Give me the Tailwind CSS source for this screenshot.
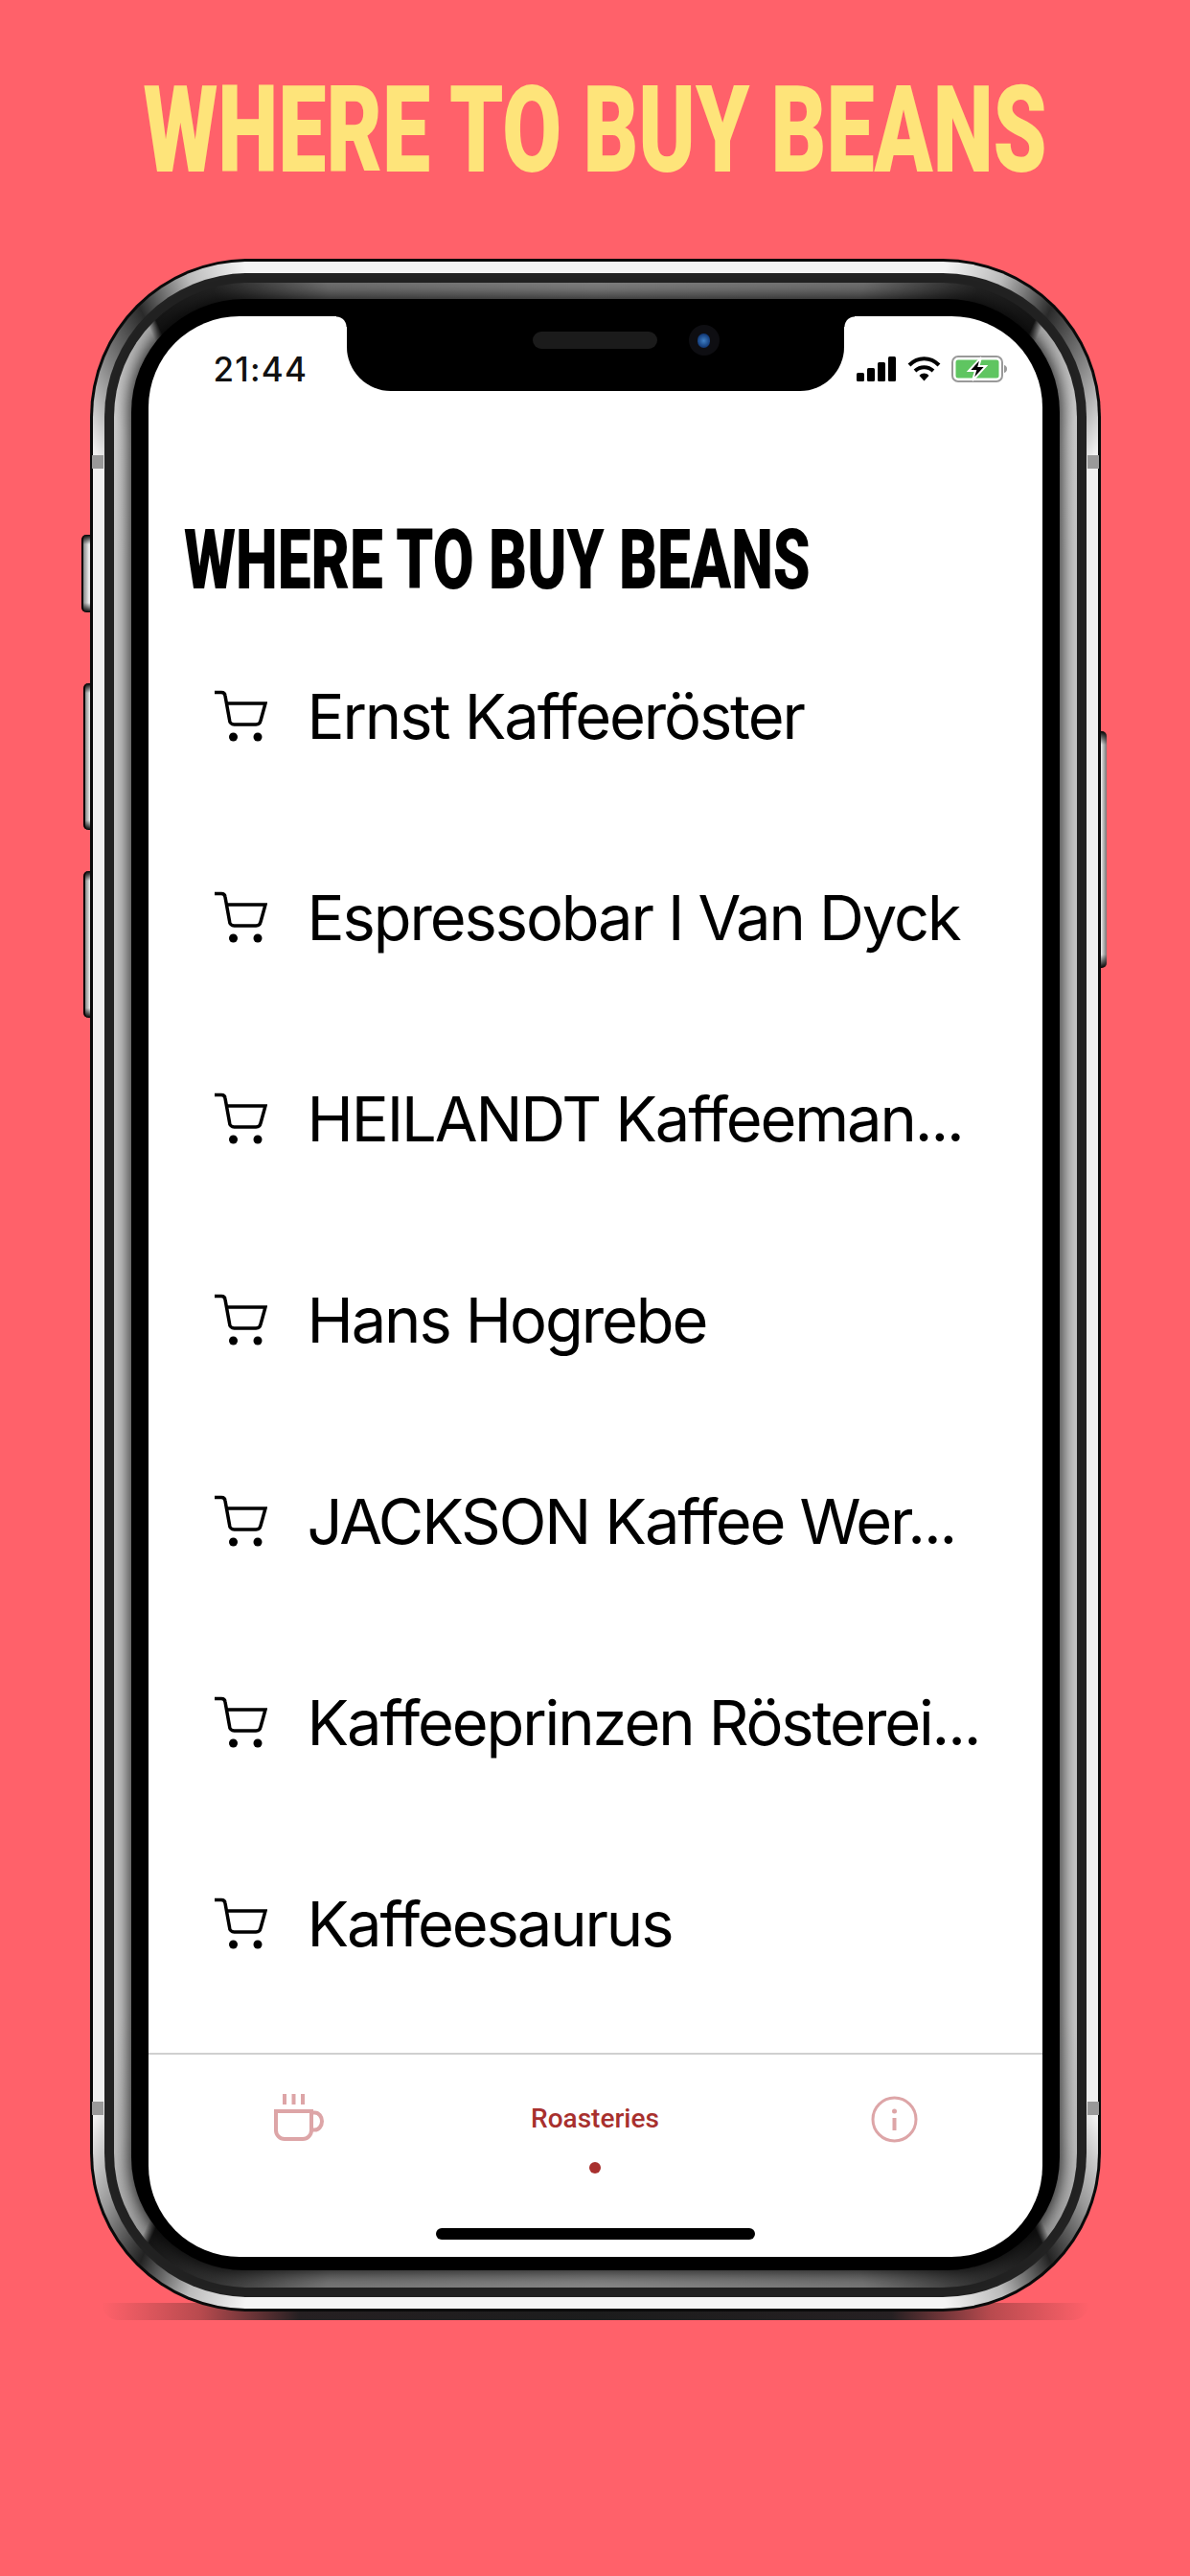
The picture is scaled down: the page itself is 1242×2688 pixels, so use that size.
<!DOCTYPE html>
<html lang="en">
<head>
    <meta charset="UTF-8">
    <title>Where to buy beans</title>
    <script src="https://cdn.jsdelivr.net/npm/@tailwindcss/browser@4"></script>
</head>
<body class="bg-[#ff616a] w-[1242px] h-[2688px] overflow-hidden flex flex-col items-center pt-[72px] font-['Inter',sans-serif]">
    <h1 class="w-[944px] h-[127px] mb-[71px] flex justify-center whitespace-nowrap font-['Roboto',sans-serif] font-black text-[127px] leading-none text-[#fee47a]">
        <span class="shrink-0 scale-x-[0.706]">WHERE TO BUY BEANS</span>
    </h1>

    <!-- phone -->
    <div class="relative w-[1055px] h-[2142px] shrink-0">
        <div class="absolute -bottom-[9px] left-[12px] right-[12px] h-[18px] rounded-b-full bg-[linear-gradient(to_right,#ff606800,#b84a4e_10%,#262022_20%,#1c1c1c_50%,#262022_80%,#b84a4e_90%,#ff606800)]"></div>
        <div class="absolute -left-[9px] top-[288px] w-[14px] h-[81px] rounded-l-[5px] border-l-2 border-black bg-[linear-gradient(to_bottom,#000,#0000_10px,#0000_calc(100%-10px),#000),linear-gradient(to_right,#888,#eee,#999)]"></div>
        <div class="absolute -left-[7px] top-[443px] w-[12px] h-[153px] rounded-l-[5px] border-l-2 border-black bg-[linear-gradient(to_bottom,#000,#0000_10px,#0000_calc(100%-10px),#000),linear-gradient(to_right,#888,#eee,#999)]"></div>
        <div class="absolute -left-[7px] top-[639px] w-[12px] h-[153px] rounded-l-[5px] border-l-2 border-black bg-[linear-gradient(to_bottom,#000,#0000_10px,#0000_calc(100%-10px),#000),linear-gradient(to_right,#888,#eee,#999)]"></div>
        <div class="absolute -right-[6px] top-[493px] w-[12px] h-[247px] rounded-r-[5px] bg-[linear-gradient(to_bottom,#000,#0000_14px,#0000_calc(100%-14px),#000),linear-gradient(to_left,#777,#eee,#999)]"></div>

        <div class="relative h-full bg-[#0a0a0a] rounded-[165px] p-[3px]">
            <div class="h-full rounded-[162px] p-[12px] bg-[conic-gradient(#f4f4f4_0deg,#f4f4f4_19deg,#bbb_22deg,#2a2a2a_25deg,#888_28deg,#f0f0f0_31deg,#f0f0f0_149deg,#999_152deg,#222_155deg,#bbb_158deg,#f4f4f4_161deg,#f4f4f4_199deg,#bbb_202deg,#222_205deg,#999_208deg,#f0f0f0_211deg,#f0f0f0_329deg,#888_332deg,#2a2a2a_335deg,#bbb_338deg,#f4f4f4_341deg)]">
                <div class="h-full rounded-[150px] p-[10px] bg-[#222]">
                    <div class="h-full rounded-[140px] pt-[17px] px-[18px] pb-[18px] bg-[conic-gradient(#808080_0deg,#707070_15deg,#222_21deg,#151515_24.5deg,#aaa_25deg,#ccc_29deg,#c8c8c8_33deg,#c8c8c8_147deg,#bbb_151deg,#999_154.5deg,#151515_155deg,#333_159deg,#777_165deg,#888_180deg,#777_195deg,#333_201deg,#151515_205deg,#999_205.5deg,#bbb_209deg,#c8c8c8_213deg,#c8c8c8_327deg,#ccc_331deg,#aaa_335deg,#151515_335.5deg,#222_339deg,#707070_345deg,#808080_360deg)]">
                        <div class="h-full rounded-[118px] pt-[18px] px-[18px] pb-[14px] bg-black shadow-[0_0_16px_3px_rgba(0,0,0,0.75)]">

                            <!-- screen -->
                            <div class="relative h-full bg-white rounded-[95px] flex flex-col">
                                <div class="absolute top-0 left-[207px] w-[519px] h-[78px] bg-black rounded-b-[46px]">
                                    <div class="absolute top-0 -left-[11px] w-[11px] h-[11px] bg-[radial-gradient(circle_at_0_100%,#fff0_10px,#000_11px)]"></div>
                                    <div class="absolute top-0 -right-[11px] w-[11px] h-[11px] bg-[radial-gradient(circle_at_100%_100%,#fff0_10px,#000_11px)]"></div>
                                    <div class="absolute top-[16px] left-[194px] w-[130px] h-[18px] rounded-full bg-[#1b1b1b]"></div>
                                    <div class="absolute top-[9px] left-[357px] w-[32px] h-[32px] rounded-full bg-[#0e0e12] flex items-center justify-center">
                                        <div class="w-[13px] h-[15px] rounded-full bg-[radial-gradient(circle,#3f7fc4,#123a78_70%)]"></div>
                                    </div>
                                </div>

                                <!-- status bar -->
                                <div class="h-[34px] mt-[38px] pl-[68px] pr-[36px] flex items-center justify-between">
                                    <span class="font-medium text-[35px] tracking-[1.200px] leading-none text-[#111]">21:44</span>
                                    <div class="flex items-center gap-[11px]">
                                        <svg width="42" height="26" viewBox="0 0 42 26"><rect x="0" y="17" width="8" height="9" rx="1.5"/><rect x="11" y="12" width="8" height="14" rx="1.5"/><rect x="22" y="6" width="8" height="20" rx="1.5"/><rect x="33" y="0" width="8" height="26" rx="1.5"/></svg>
                                        <svg width="35" height="26" viewBox="0 0 35 26"><path d="M2 9C11 0 24 0 33 9" fill="none" stroke="#000" stroke-width="4"/><path d="M8 15C13.500 10 21.500 10 27 15" fill="none" stroke="#000" stroke-width="4"/><path d="M12.500 20C15.500 16.800 19.500 16.800 22.500 20L17.500 25.500Z"/></svg>
                                        <svg width="59" height="28" viewBox="0 0 59 28"><rect x="1" y="1" width="52" height="26" rx="6" fill="#fff" stroke="#999" stroke-width="2"/><rect x="4.500" y="4.500" width="45" height="19" rx="2.500" fill="#5fc561"/><path d="M55 10c2 .5 3 2 3 4s-1 3.500-3 4Z" fill="#999"/><path d="M31 2 18 16h7l-3 10 14-15h-7.500Z" fill="#000" stroke="#fff" stroke-width="2"/></svg>
                                    </div>
                                </div>

                                <h2 class="mt-[138px] mb-[14px] pl-[37px] h-[88px] whitespace-nowrap font-['Roboto',sans-serif] font-black text-[88px] leading-none text-black">
                                    <span class="inline-block origin-left scale-x-[0.706]">WHERE TO BUY BEANS</span>
                                </h2>

                                <!-- roasteries -->
                                <ul class="flex flex-col">
                                    <li class="h-[210px] pl-[68px] flex items-center gap-[42px] text-[65px] tracking-[-2.1px] text-black whitespace-nowrap">
                                        <svg class="shrink-0" width="56" height="55" viewBox="0 0 56 55" fill="none" stroke="#000" stroke-width="3.500"><path d="M1 2.500H8a4 4 0 0 1 4 3.500L16.500 31a5 5 0 0 0 5 5H44a5 5 0 0 0 5-4L54 14H13.500"/><circle cx="20.500" cy="49" r="4.500" fill="#000" stroke="none"/><circle cx="46" cy="49" r="4.500" fill="#000" stroke="none"/></svg>
                                        <span class="pt-[2px]">Ernst Kaffeeröster</span>
                                    </li>
                                    <li class="h-[210px] pl-[68px] flex items-center gap-[42px] text-[65px] tracking-[-2.1px] text-black whitespace-nowrap">
                                        <svg class="shrink-0" width="56" height="55" viewBox="0 0 56 55" fill="none" stroke="#000" stroke-width="3.500"><path d="M1 2.500H8a4 4 0 0 1 4 3.500L16.500 31a5 5 0 0 0 5 5H44a5 5 0 0 0 5-4L54 14H13.500"/><circle cx="20.500" cy="49" r="4.500" fill="#000" stroke="none"/><circle cx="46" cy="49" r="4.500" fill="#000" stroke="none"/></svg>
                                        <span class="pt-[2px]">Espressobar I Van Dyck</span>
                                    </li>
                                    <li class="h-[210px] pl-[68px] flex items-center gap-[42px] text-[65px] tracking-[-2.1px] text-black whitespace-nowrap">
                                        <svg class="shrink-0" width="56" height="55" viewBox="0 0 56 55" fill="none" stroke="#000" stroke-width="3.500"><path d="M1 2.500H8a4 4 0 0 1 4 3.500L16.500 31a5 5 0 0 0 5 5H44a5 5 0 0 0 5-4L54 14H13.500"/><circle cx="20.500" cy="49" r="4.500" fill="#000" stroke="none"/><circle cx="46" cy="49" r="4.500" fill="#000" stroke="none"/></svg>
                                        <span class="pt-[2px]">HEILANDT Kaffeeman...</span>
                                    </li>
                                    <li class="h-[210px] pl-[68px] flex items-center gap-[42px] text-[65px] tracking-[-2.1px] text-black whitespace-nowrap">
                                        <svg class="shrink-0" width="56" height="55" viewBox="0 0 56 55" fill="none" stroke="#000" stroke-width="3.500"><path d="M1 2.500H8a4 4 0 0 1 4 3.500L16.500 31a5 5 0 0 0 5 5H44a5 5 0 0 0 5-4L54 14H13.500"/><circle cx="20.500" cy="49" r="4.500" fill="#000" stroke="none"/><circle cx="46" cy="49" r="4.500" fill="#000" stroke="none"/></svg>
                                        <span class="pt-[2px]">Hans Hogrebe</span>
                                    </li>
                                    <li class="h-[210px] pl-[68px] flex items-center gap-[42px] text-[65px] tracking-[-2.1px] text-black whitespace-nowrap">
                                        <svg class="shrink-0" width="56" height="55" viewBox="0 0 56 55" fill="none" stroke="#000" stroke-width="3.500"><path d="M1 2.500H8a4 4 0 0 1 4 3.500L16.500 31a5 5 0 0 0 5 5H44a5 5 0 0 0 5-4L54 14H13.500"/><circle cx="20.500" cy="49" r="4.500" fill="#000" stroke="none"/><circle cx="46" cy="49" r="4.500" fill="#000" stroke="none"/></svg>
                                        <span class="pt-[2px]">JACKSON Kaffee Wer...</span>
                                    </li>
                                    <li class="h-[210px] pl-[68px] flex items-center gap-[42px] text-[65px] tracking-[-2.1px] text-black whitespace-nowrap">
                                        <svg class="shrink-0" width="56" height="55" viewBox="0 0 56 55" fill="none" stroke="#000" stroke-width="3.500"><path d="M1 2.500H8a4 4 0 0 1 4 3.500L16.500 31a5 5 0 0 0 5 5H44a5 5 0 0 0 5-4L54 14H13.500"/><circle cx="20.500" cy="49" r="4.500" fill="#000" stroke="none"/><circle cx="46" cy="49" r="4.500" fill="#000" stroke="none"/></svg>
                                        <span class="pt-[2px]">Kaffeeprinzen Rösterei...</span>
                                    </li>
                                    <li class="h-[210px] pl-[68px] flex items-center gap-[42px] text-[65px] tracking-[-2.1px] text-black whitespace-nowrap">
                                        <svg class="shrink-0" width="56" height="55" viewBox="0 0 56 55" fill="none" stroke="#000" stroke-width="3.500"><path d="M1 2.500H8a4 4 0 0 1 4 3.500L16.500 31a5 5 0 0 0 5 5H44a5 5 0 0 0 5-4L54 14H13.500"/><circle cx="20.500" cy="49" r="4.500" fill="#000" stroke="none"/><circle cx="46" cy="49" r="4.500" fill="#000" stroke="none"/></svg>
                                        <span class="pt-[2px]">Kaffeesaurus</span>
                                    </li>
                                </ul>

                                <!-- tab bar -->
                                <div class="mt-auto h-[213px] border-t-2 border-[#d0d0d0] grid grid-cols-3">
                                    <div class="flex justify-center pt-[41px] pl-[4px]">
                                        <svg width="52" height="49" viewBox="0 0 52 49" fill="none" stroke="#dda5a7" stroke-width="4"><path d="M11 0V11M20.500 0V11M30 0V11"/><path d="M2 18H39V38a9 9 0 0 1-9 9H11a9 9 0 0 1-9-9Z"/><path d="M39 19.500h3.500a7.500 9 0 0 1 0 18H39"/></svg>
                                    </div>
                                    <div class="flex flex-col items-center pt-[51px]">
                                        <span class="font-['Roboto',sans-serif] font-medium text-[28px] leading-[32px] text-[#a8302e]">Roasteries</span>
                                        <span class="mt-[29px] w-[12px] h-[12px] rounded-full bg-[#a8302e]"></span>
                                    </div>
                                    <div class="flex justify-center pt-[43px] pl-[2px]">
                                        <svg width="49" height="49" viewBox="0 0 49 49" fill="none" stroke="#dda5a7" stroke-width="3"><circle cx="24.500" cy="24.500" r="22.500"/><path d="M24.500 23V36" stroke-width="4"/><circle cx="24.500" cy="16" r="2.500" fill="#dda5a7" stroke="none"/></svg>
                                    </div>
                                </div>
                                <div class="absolute bottom-[18px] left-[300px] w-[333px] h-[12px] rounded-full bg-black"></div>
                            </div>
                        </div>
                    </div>
                </div>
            </div>
        </div>

        <!-- antenna lines -->
        <div class="absolute left-[2px] top-[205px] w-[12px] h-[14px] bg-[#999]"></div>
        <div class="absolute right-[2px] top-[205px] w-[12px] h-[14px] bg-[#999]"></div>
        <div class="absolute left-[2px] top-[1923px] w-[12px] h-[14px] bg-[#999]"></div>
        <div class="absolute right-[2px] top-[1923px] w-[12px] h-[14px] bg-[#999]"></div>
    </div>
</body>
</html>
